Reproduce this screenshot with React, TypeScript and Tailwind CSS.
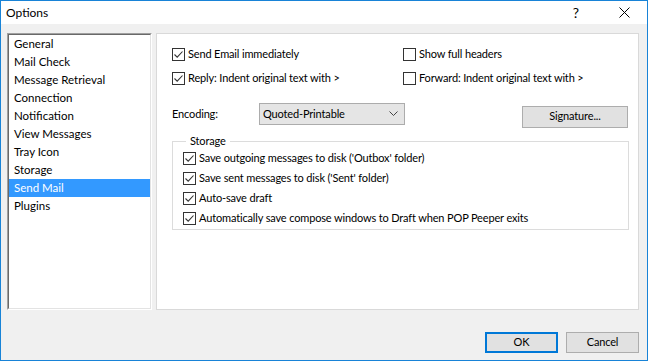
import React from 'react';

const pages = [
  'General',
  'Mail Check',
  'Message Retrieval',
  'Connection',
  'Notification',
  'View Messages',
  'Tray Icon',
  'Storage',
  'Send Mail',
  'Plugins',
];

const CheckBox: React.FC<{ checked: boolean; label: string }> = ({ checked, label }) => (
  <label className="flex items-center gap-[3px] h-[14px] whitespace-nowrap">
    <span className="w-[13px] h-[13px] border border-[#333333] bg-white flex items-center justify-center shrink-0">
      {checked && (
        <svg width="11" height="11" viewBox="0 0 11 11">
          <path d="M1.5 5.5 L4.2 8.2 L9.5 2.5" fill="none" stroke="#333333" strokeWidth="1.1" />
        </svg>
      )}
    </span>
    <span>{label}</span>
  </label>
);

export default function App() {
  return (
    <div
      className="w-[648px] h-[361px] border border-[#1883d7] bg-[#f0f0f0] flex flex-col text-[11px] tracking-[-0.15px] text-black overflow-hidden"
      style={{ fontFamily: 'Lato, "Noto Sans", sans-serif' }}
    >
      {/* title bar */}
      <div className="h-[23px] bg-white flex items-center shrink-0 text-[12px] tracking-normal">
        <span className="pl-[5px] flex-1">Options</span>
        <span className="w-[46px] text-center text-[14px] mr-[2px]">?</span>
        <span className="w-[46px] flex justify-center">
          <svg width="11" height="11" viewBox="0 0 11 11">
            <path d="M0.5 0.5 L10.5 10.5 M10.5 0.5 L0.5 10.5" stroke="#000" strokeWidth="1" />
          </svg>
        </span>
      </div>

      <div className="flex-1 flex flex-col pl-[6px] pr-[8px] pt-[9px]">
        <div className="flex gap-[4px] h-[277px]">
          {/* page list */}
          <div className="w-[145px] border border-t-[#a0a0a0] border-l-[#a0a0a0] border-r-white border-b-white">
            <div className="h-full border border-t-[#696969] border-l-[#696969] border-r-[#e3e3e3] border-b-[#e3e3e3] bg-white text-[11.5px] tracking-normal">
              {pages.map((p) => (
                <div
                  key={p}
                  className={
                    p === 'Send Mail'
                      ? 'h-[18px] leading-[18px] pl-[5px] bg-[#3399ff] text-white'
                      : 'h-[18px] leading-[18px] pl-[5px]'
                  }
                >
                  {p}
                </div>
              ))}
            </div>
          </div>

          {/* page content */}
          <div className="flex-1 bg-white border border-[#d9d9d9] pl-[15px] pr-[9px] pt-[13px]">
            <div className="grid grid-cols-[231px_1fr] gap-y-[10px]">
              <CheckBox checked label="Send Email immediately" />
              <CheckBox checked={false} label="Show full headers" />
              <CheckBox checked label="Reply: Indent original text with >" />
              <CheckBox checked={false} label="Forward: Indent original text with >" />
            </div>

            <div className="flex items-center mt-[17px] h-[24px]">
              <span className="w-[87px]">Encoding:</span>
              <div className="w-[146px] h-[22px] border border-[#acacac] bg-[#e5e5e5] flex items-center pl-[3px] pr-[6px]">
                <span className="flex-1">Quoted-Printable</span>
                <svg width="9" height="6" viewBox="0 0 9 6">
                  <path d="M0.5 0.5 L4.5 4.5 L8.5 0.5" fill="none" stroke="#444" strokeWidth="1" />
                </svg>
              </div>
              <button className="ml-[117px] mt-[5px] w-[106px] h-[22px] border border-[#adadad] bg-[#e1e1e1]">
                Signature...
              </button>
            </div>

            <fieldset className="mt-[8px] border border-[#dcdcdc] pl-[10px] pb-[4px] w-[457px]">
              <legend className="ml-[3px] px-[4px] leading-[14px]">Storage</legend>
              <div className="flex flex-col gap-[6px] pt-[3px]">
                <CheckBox checked label="Save outgoing messages to disk ('Outbox' folder)" />
                <CheckBox checked label="Save sent messages to disk ('Sent' folder)" />
                <CheckBox checked label="Auto-save draft" />
                <CheckBox checked label="Automatically save compose windows to Draft when POP Peeper exits" />
              </div>
            </fieldset>
          </div>
        </div>

        {/* dialog buttons */}
        <div className="flex justify-end gap-[8px] mt-[22px]">
          <button className="w-[73px] h-[21px] border-2 border-[#0078d7] bg-[#e1e1e1]">OK</button>
          <button className="w-[73px] h-[21px] border border-[#adadad] bg-[#e1e1e1]">Cancel</button>
        </div>
      </div>
    </div>
  );
}
